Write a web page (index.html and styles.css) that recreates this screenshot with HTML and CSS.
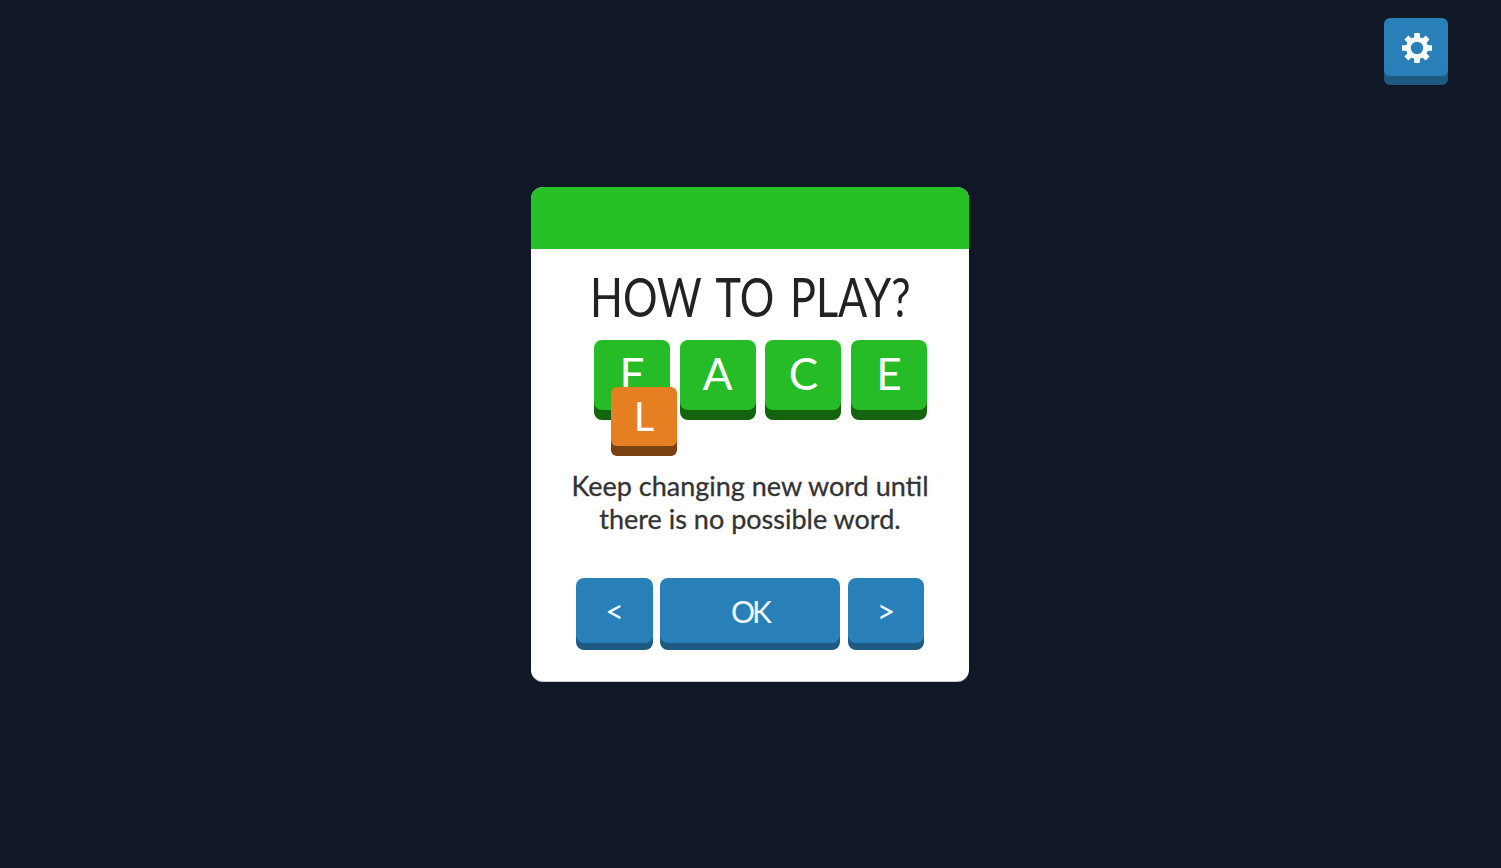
FILE: index.html
```html
<!DOCTYPE html>
<html lang="en">
<head>
    <meta charset="UTF-8">
    <title>How to play</title>
    <link rel="stylesheet" href="styles.css">
</head>
<body>
    <button class="settings-btn" type="button" aria-label="Settings">
        <svg class="gear" viewBox="0 0 32 32" width="32" height="32">
            <g stroke="#fff" stroke-width="5.6">
                <line x1="16" y1="1" x2="16" y2="31"/>
                <line x1="1" y1="16" x2="31" y2="16"/>
                <line x1="5.4" y1="5.4" x2="26.6" y2="26.6"/>
                <line x1="26.6" y1="5.4" x2="5.4" y2="26.6"/>
            </g>
            <circle cx="16" cy="16" r="11" fill="#fff"/>
            <circle cx="16" cy="16" r="6.2" fill="#2980b9"/>
        </svg>
    </button>

    <div class="modal">
        <div class="modal-header"></div>
        <div class="modal-body">
            <h1 class="title">HOW TO PLAY?</h1>
            <div class="tiles">
                <div class="tile">F</div>
                <div class="tile">A</div>
                <div class="tile">C</div>
                <div class="tile">E</div>
                <div class="tile-swap">L</div>
            </div>
            <p class="help-text">Keep changing new word until<br>there is no possible word.</p>
            <div class="button-row">
                <button class="btn btn-arrow" type="button">&lt;</button>
                <button class="btn btn-ok" type="button">OK</button>
                <button class="btn btn-arrow" type="button">&gt;</button>
            </div>
        </div>
    </div>
</body>
</html>
```

FILE: styles.css
```css
* {
    margin: 0;
    padding: 0;
    box-sizing: border-box;
    font-family: 'Lato', 'Open Sans', sans-serif;
}

body {
    height: 100vh;
    background: #101828;
    display: flex;
    justify-content: center;
    align-items: center;
    overflow: hidden;
}

button {
    border: none;
    color: #f2f8fc;
    background: #2980b9;
    cursor: pointer;
}

.settings-btn {
    position: absolute;
    top: 18px;
    right: 53px;
    width: 64px;
    height: 58px;
    border-radius: 6px;
    box-shadow: 0 9px 0 #1c5a82;
    display: flex;
    justify-content: center;
    align-items: center;
}

.gear {
    margin-left: 2px;
    margin-top: 2px;
}

.modal {
    width: 438px;
    height: 494px;
    margin-right: 1px;
    background: #fff;
    border-radius: 12px;
    box-shadow: 0 1px 0 #c9ccd2;
    overflow: hidden;
}

.modal-header {
    height: 62px;
    background: #27c027;
}

.modal-body {
    display: flex;
    flex-direction: column;
    align-items: center;
    padding-top: 14px;
}

.title {
    font-size: 55px;
    font-weight: 400;
    line-height: 66px;
    word-spacing: 6px;
    color: #222;
    white-space: nowrap;
    transform: scaleX(0.785);
}

.tiles {
    position: relative;
    display: flex;
    gap: 9.67px;
    margin-top: 11px;
    margin-left: 21px;
}

.tile {
    width: 76px;
    height: 70px;
    border-radius: 8px;
    background: #25bc28;
    box-shadow: 0 10px 0 #14640f;
    color: #fff;
    font-size: 44px;
    line-height: 66px;
    text-align: center;
}

.tile-swap {
    position: absolute;
    left: 17px;
    top: 47px;
    width: 66px;
    height: 59px;
    border-radius: 6px;
    background: #e67e22;
    box-shadow: 0 10px 0 #7a4212;
    color: #fff;
    font-size: 40px;
    line-height: 58px;
    text-align: center;
}

.help-text {
    margin-top: 59px;
    font-size: 27px;
    line-height: 33px;
    color: #333;
    text-align: center;
    -webkit-text-stroke: 0.3px #333;
}

.button-row {
    display: flex;
    margin-top: 43px;
}

.btn {
    height: 65px;
    border-radius: 8px;
    box-shadow: 0 7px 0 #1c5a82;
    font-size: 30px;
}

.btn-arrow {
    width: 77px;
    font-size: 32px;
}

.btn-arrow:last-child {
    width: 76px;
}

.btn-ok {
    width: 180px;
    margin: 0 8px 0 7px;
    letter-spacing: -3px;
}
```
